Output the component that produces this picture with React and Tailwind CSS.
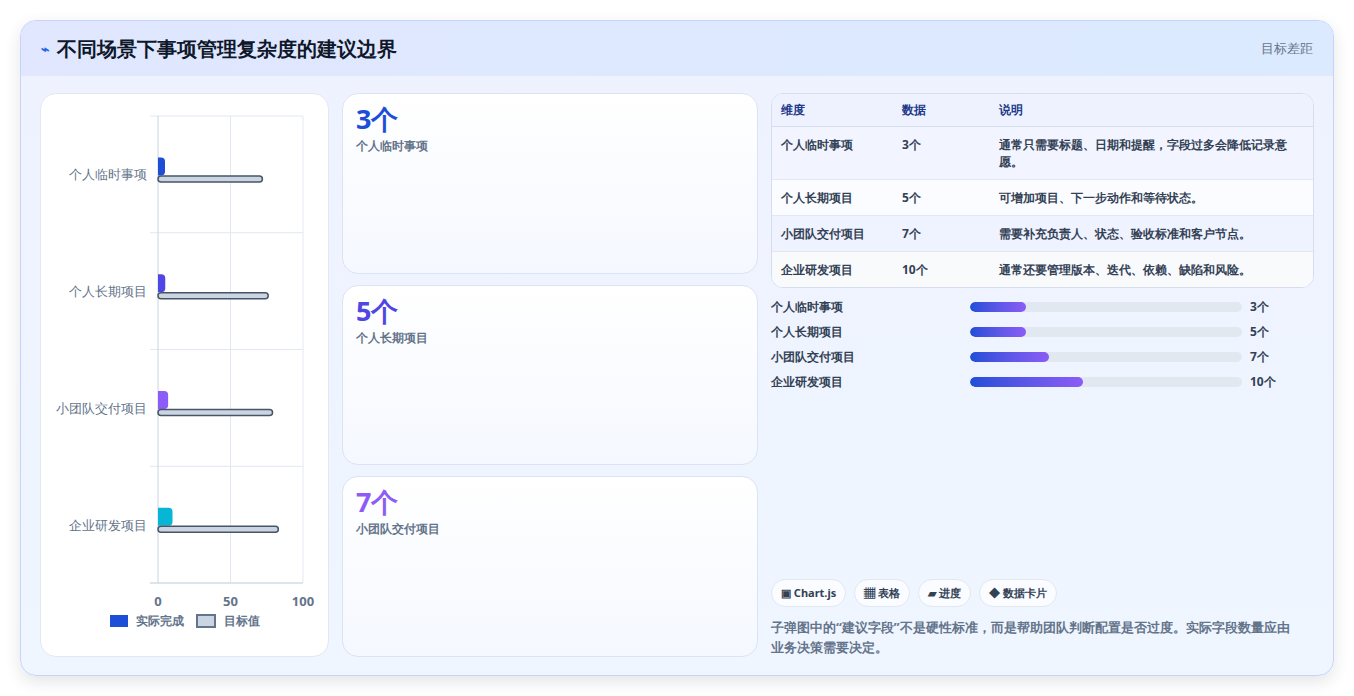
const rows = [
  { name: "个人临时事项", actual: 3, target: 72, color: "#1d4ed8" },
  { name: "个人长期项目", actual: 5, target: 76, color: "#4f46e5" },
  { name: "小团队交付项目", actual: 7, target: 79, color: "#8b5cf6" },
  { name: "企业研发项目", actual: 10, target: 83, color: "#06b6d4" },
];

const table = [
  ["个人临时事项", "3个", "通常只需要标题、日期和提醒，字段过多会降低记录意愿。", "bg-[#f2f5ff]"],
  ["个人长期项目", "5个", "可增加项目、下一步动作和等待状态。", "bg-[#fbfcff]"],
  ["小团队交付项目", "7个", "需要补充负责人、状态、验收标准和客户节点。", "bg-[#eff3ff]"],
  ["企业研发项目", "10个", "通常还要管理版本、迭代、依赖、缺陷和风险。", "bg-[#f8fafc]"],
];

const cards = [
  ["3个", "个人临时事项", "text-[#1d4ed8]"],
  ["5个", "个人长期项目", "text-[#4f46e5]"],
  ["7个", "小团队交付项目", "text-[#8b5cf6]"],
];

function Chart() {
  const x0 = 117, w = 145, top = 22, rowH = 116.75;
  return (
    <svg width="288" height="520" className="block">
      {[0, 1, 2, 3, 4].map((i) => (
        <line key={i} x1={x0 - 8} x2={x0 + w} y1={top + i * rowH} y2={top + i * rowH} stroke="#e2e8f0" />
      ))}
      {[0, 0.5, 1].map((f, i) => (
        <line key={i} x1={x0 + f * w} x2={x0 + f * w} y1={top} y2={top + 4 * rowH + (i === 0 ? 0 : 0)} stroke={i === 0 ? "#cbd5e1" : "#e2e8f0"} />
      ))}
      <line x1={x0 - 8} x2={x0 + w} y1={top + 4 * rowH} y2={top + 4 * rowH} stroke="#cbd5e1" />
      {rows.map((r, i) => {
        const cy = top + i * rowH + rowH / 2;
        const aw = Math.max(7, (r.actual / 100) * w);
        return (
          <g key={r.name}>
            <text x={x0 - 11} y={cy + 5} textAnchor="end" fontSize="13" fill="#64748b">{r.name}</text>
            <path d={`M${x0} ${cy - 17} h${aw - 4} a4 4 0 0 1 4 4 v10 a4 4 0 0 1 -4 4 h-${aw - 4} z`} fill={r.color} />
            <rect x={x0} y={cy + 1.5} width={(r.target / 100) * w} height="6" rx="3" fill="#cbd5e1" stroke="#475569" strokeWidth="1.5" />
          </g>
        );
      })}
      {[["0", 0], ["50", 0.5], ["100", 1]].map(([t, f]) => (
        <text key={t} x={x0 + f * w} y={top + 4 * rowH + 23} textAnchor="middle" fontSize="13" fontWeight="700" fill="#64748b">{t}</text>
      ))}
    </svg>
  );
}

export default function App() {
  return (
    <div className="w-[1354px] h-[696px] bg-white pt-5 px-5 font-['Liberation_Sans','Noto_Sans_CJK_SC',sans-serif]">
      <div className="h-[656px] rounded-2xl border border-[#c7d2fe] bg-gradient-to-b from-[#eef2ff] to-[#eff6ff] shadow-[0_6px_16px_rgba(30,41,59,0.12)] overflow-hidden flex flex-col">
        <div className="h-[55px] shrink-0 flex items-center justify-between px-5 bg-gradient-to-r from-[#e0e7ff] to-[#dbeafe]">
          <div className="flex items-center gap-2">
            <span className="text-[#2563eb] text-sm font-bold">⌁</span>
            <span className="text-[20px] font-bold text-[#0f172a]">不同场景下事项管理复杂度的建议边界</span>
          </div>
          <span className="text-[13px] text-[#64748b]">目标差距</span>
        </div>
        <div className="flex-1 flex gap-[13px] px-[19px] pt-[17px] pb-[18px]">
          <div className="w-[289px] rounded-2xl bg-white border border-[#e2e8f0] flex flex-col items-center">
            <Chart />
            <div className="flex items-center gap-2 text-[12px] font-bold text-[#64748b] -mt-[2px]">
              <span className="w-[18px] h-[12px] bg-[#1d4ed8]" />
              <span>实际完成</span>
              <span className="w-[20px] h-[14px] bg-[#cbd5e1] border-2 border-[#64748b] ml-1" />
              <span>目标值</span>
            </div>
          </div>
          <div className="w-[416px] flex flex-col gap-[11px]">
            {cards.map(([v, l, c]) => (
              <div key={l} className="flex-1 rounded-2xl bg-gradient-to-b from-white to-[#f5f8ff] border border-[#dbe3f5] px-[13px] pt-[9px]">
                <div className={`text-[27px] leading-[32px] font-bold ${c}`}>{v}</div>
                <div className="text-[12px] font-bold text-[#64748b] mt-[2px]">{l}</div>
              </div>
            ))}
          </div>
          <div className="flex-1 flex flex-col">
            <div className="rounded-xl border border-[#d6deee] overflow-hidden bg-white">
              <div className="flex h-[33px] items-center text-[12px] font-bold text-[#1e3a8a] bg-[#eef2ff] border-b border-[#d6deee]">
                <span className="w-[130px] pl-[9px]">维度</span>
                <span className="w-[97px]">数据</span>
                <span>说明</span>
              </div>
              {table.map(([a, b, c, bg]) => (
                <div key={a} className={`flex py-[9px] text-[12px] leading-[17px] font-bold text-[#334155] border-b last:border-b-0 border-[#e2e8f0] ${bg}`}>
                  <span className="w-[130px] pl-[9px] shrink-0">{a}</span>
                  <span className="w-[97px] shrink-0">{b}</span>
                  <span className="pr-3">{c}</span>
                </div>
              ))}
            </div>
            <div className="flex flex-col gap-[7px] mt-[10px]">
              {rows.map((r, i) => (
                <div key={r.name} className="flex items-center h-[18px] text-[12px] font-bold text-[#334155]">
                  <span className="w-[199px]">{r.name}</span>
                  <div className="w-[272px] h-[10px] rounded-full bg-[#e2e8f0] overflow-hidden">
                    <div className="h-full rounded-full bg-gradient-to-r from-[#1d4ed8] to-[#8b5cf6]" style={{ width: [56, 56, 79, 113][i] }} />
                  </div>
                  <span className="ml-2">{r.actual}个</span>
                </div>
              ))}
            </div>
            <div className="flex-1" />
            <div className="flex gap-2 text-[11px] font-bold text-[#334155]">
              {["▣ Chart.js", "▦ 表格", "▰ 进度", "◆ 数据卡片"].map((p) => (
                <span key={p} className="h-[28px] px-[9px] flex items-center rounded-full bg-white/70 border border-[#e2e8f0]">{p}</span>
              ))}
            </div>
            <p className="mt-[10px] text-[13px] leading-[20px] font-bold text-[#64748b] pr-4">
              子弹图中的“建议字段”不是硬性标准，而是帮助团队判断配置是否过度。实际字段数量应由业务决策需要决定。
            </p>
          </div>
        </div>
      </div>
    </div>
  );
}
